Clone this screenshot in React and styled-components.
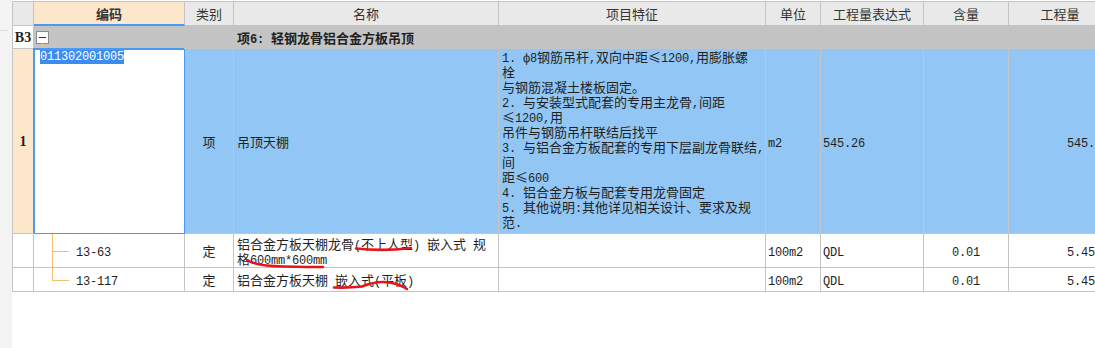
import React from 'react'
import styled, { createGlobalStyle } from 'styled-components'

const LINE = '#c4c4c4'
const BLUE = '#4a9af5'
const ORANGE = '#f7c06c'

const GlobalStyle = createGlobalStyle`
  html, body {
    margin: 0;
    padding: 0;
    background: #fff;
    overflow: hidden;
  }
  body {
    font-family: "Noto Sans CJK SC", "Liberation Sans", sans-serif;
    color: #1f1f1f;
  }
`

const Page = styled.div`
  position: relative;
  display: flex;
  width: 1095px;
  height: 348px;
  overflow: hidden;
  background: #fff;
`

const Sidebar = styled.div`
  flex: none;
  box-sizing: border-box;
  width: 12px;
  padding-top: 30px;
  background: #f3f3f3;
`

const SideMark = styled.div`
  width: 8px;
  height: 1px;
  background: #dedede;
`

const Sheet = styled.div`
  flex: none;
  align-self: flex-start;
  margin-top: 1px;
  display: grid;
  grid-template-columns: 21px 151px 49px 265px 267px 55px 103px 85px 103px;
  grid-template-rows: 24px 23px 185px 34px 24px;
  border-top: 1px solid ${LINE};
  border-left: 1px solid ${LINE};
  font-size: 13px;
`

const Head = styled.div`
  box-sizing: border-box;
  display: flex;
  align-items: center;
  justify-content: center;
  border-right: 1px solid ${LINE};
  border-bottom: ${p => (p.$active ? `2px solid ${BLUE}` : `1px solid ${LINE}`)};
  background: ${p => (p.$active ? '#fde7cb' : '#e9e9e9')};
  color: #333;
  font-weight: ${p => (p.$active ? 700 : 400)};
`

const Cell = styled.div`
  box-sizing: border-box;
  display: flex;
  align-items: ${p => (p.$top ? 'flex-start' : 'center')};
  justify-content: ${p => ({ center: 'center', right: 'flex-end' }[p.$align] || 'flex-start')};
  padding: 0 ${p => (p.$pad ?? 3)}px;
  border-right: 1px solid ${LINE};
  border-bottom: 1px solid ${LINE};
  background: ${p => p.$bg || '#fff'};
  font-weight: ${p => (p.$bold ? 700 : 400)};
  line-height: 15px;
  white-space: pre;
  overflow: hidden;
`

const RowHead = styled(Cell)`
  justify-content: center;
  padding: 0;
  font-family: "Liberation Serif", serif;
  font-size: 14px;
  font-weight: 700;
  color: #222;
`

const EditCell = styled(Cell)`
  align-items: flex-start;
  padding: 1px 0 0 6px;
  border-right-color: ${BLUE};
  border-bottom-color: ${BLUE};
  box-shadow: -1px -1px 0 ${BLUE}, inset 1px 1px 0 ${BLUE};
`

const Selected = styled.span`
  background: #3b8cf0;
  color: #fff;
  font-family: "Liberation Mono", monospace;
  font-size: 12px;
  letter-spacing: -0.2px;
  line-height: 14px;
`

const Half = styled.span`
  font-family: "Liberation Mono", monospace;
  font-size: 12px;
  letter-spacing: -0.2px;
  line-height: 0;
`

const Toggle = styled.span`
  position: relative;
  box-sizing: border-box;
  display: flex;
  align-items: center;
  justify-content: center;
  width: 13px;
  height: 13px;
  margin-left: 2px;
  border: 1px solid #8c8c8c;
  background: #fff;

  &::before {
    content: '';
    width: 7px;
    height: 1px;
    background: #333;
  }

  &::after {
    content: '';
    position: absolute;
    left: 5px;
    top: 100%;
    width: 1px;
    height: 6px;
    background: ${ORANGE};
  }
`

const Branch = styled.span`
  position: relative;
  flex: none;
  align-self: stretch;
  width: 17px;
  margin: 0 7px 0 18px;

  &::before {
    content: '';
    position: absolute;
    left: 0;
    top: 0;
    width: 1px;
    height: ${p => (p.$last ? '50%' : '100%')};
    background: ${ORANGE};
  }

  &::after {
    content: '';
    position: absolute;
    left: 0;
    top: 50%;
    width: 17px;
    height: 1px;
    background: ${ORANGE};
  }
`

const Marks = styled.svg`
  position: absolute;
  left: 0;
  top: 0;
  pointer-events: none;
`

// latin runs get the narrow mono face, the rest stays CJK
const mix = (s) =>
  s.split(/([\x20-\x7eф]+)/).map((part, i) => (i % 2 ? <Half key={i}>{part}</Half> : part))

const T = ({ children, ...p }) => (
  <Cell {...p}>
    <span>{mix(children)}</span>
  </Cell>
)

const columns = ['', '编码', '类别', '名称', '项目特征', '单位', '工程量表达式', '含量', '工程量']

const feature = [
  '1. ф8钢筋吊杆,双向中距≤1200,用膨胀螺',
  '栓',
  '与钢筋混凝土楼板固定。',
  '2. 与安装型式配套的专用主龙骨,间距',
  '≤1200,用',
  '吊件与钢筋吊杆联结后找平',
  '3. 与铝合金方板配套的专用下层副龙骨联结,',
  '间',
  '距≤600',
  '4. 铝合金方板与配套专用龙骨固定',
  '5. 其他说明:其他详见相关设计、要求及规',
  '范.'
].join('\n')

const subItems = [
  { code: '13-63', name: '铝合金方板天棚龙骨(不上人型) 嵌入式 规\n格600mm*600mm' },
  { code: '13-117', name: '铝合金方板天棚 嵌入式(平板)', last: true }
]

const GREY = '#c4c4c4'
const SKY = '#92c7f5'

export default function App () {
  return (
    <Page>
      <GlobalStyle />
      <Sidebar><SideMark /></Sidebar>
      <Sheet>
        {columns.map((c, i) => (
          <Head key={i} $active={c === '编码'}>{c}</Head>
        ))}

        <RowHead $bg='#fff'>B3</RowHead>
        <Cell $bg={GREY} $pad={0}><Toggle /></Cell>
        <Cell $bg={GREY} />
        <T $bg={GREY} $bold>项6: 轻钢龙骨铝合金方板吊顶</T>
        <Cell $bg={GREY} />
        <Cell $bg={GREY} />
        <Cell $bg={GREY} />
        <Cell $bg={GREY} />
        <Cell $bg={GREY} />

        <RowHead $bg='#fde7cb'>1</RowHead>
        <EditCell><Selected>011302001005</Selected></EditCell>
        <T $bg={SKY} $align='center'>项</T>
        <T $bg={SKY}>吊顶天棚</T>
        <T $bg={SKY} $top>{feature}</T>
        <T $bg={SKY} $pad={2}>m2</T>
        <T $bg={SKY} $pad={2}>545.26</T>
        <Cell $bg={SKY} />
        <T $bg={SKY} $align='right' $pad={2}>545.26</T>

        {subItems.map(item => (
          <React.Fragment key={item.code}>
            <Cell />
            <Cell $pad={0}>
              <Branch $last={item.last} />
              <span>{mix(item.code)}</span>
            </Cell>
            <T $align='center'>定</T>
            <T>{item.name}</T>
            <Cell />
            <T $pad={2}>100m2</T>
            <T $pad={2}>QDL</T>
            <T $align='center'>0.01</T>
            <T $align='right' $pad={2}>5.4526</T>
          </React.Fragment>
        ))}
      </Sheet>

      <Marks width='1095' height='348' viewBox='0 0 1095 348'>
        <g fill='none' stroke='#e5141b' strokeWidth='2.6' strokeLinecap='round'>
          <path d='M356 248.5 Q383 251.5 411 248' />
          <path d='M247 260 Q256 266 283 266.5 T323 267' />
          <path d='M334 287.5 Q350 288 362 286.5 Q378 280 392 283 Q401 285 407 289' />
        </g>
      </Marks>
    </Page>
  )
}
